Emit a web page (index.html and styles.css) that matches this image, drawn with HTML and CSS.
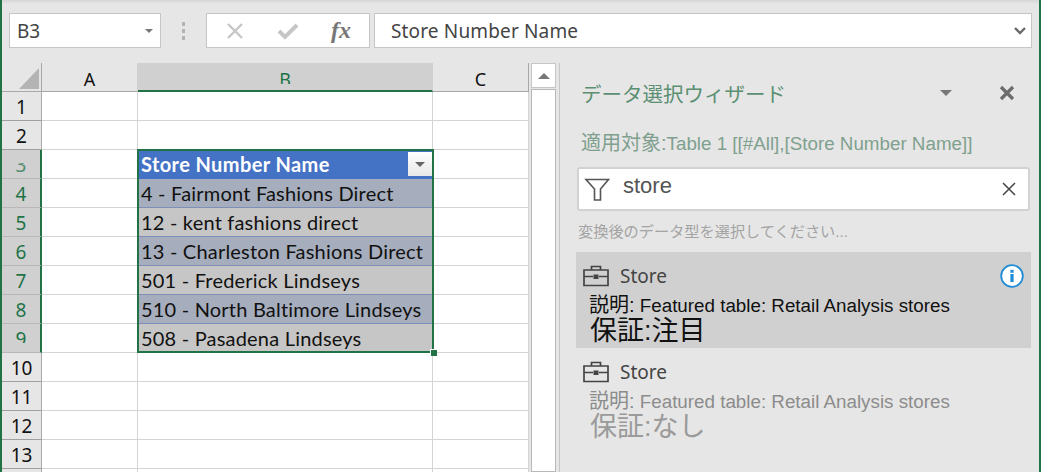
FILE: index.html
```html
<!DOCTYPE html>
<html lang="ja">
<head>
  <meta charset="UTF-8" />
  <meta name="viewport" content="width=device-width, initial-scale=1.0" />
  <title>データ選択ウィザード</title>
  <link rel="stylesheet" href="styles.css">
</head>
<body>
  <div class="formula-bar">
    <div class="name-box">
      <span>B3</span>
      <span class="tri-down small"></span>
    </div>
    <div class="grip"><i></i><i></i><i></i></div>
    <div class="fx-buttons">
      <svg class="fx-icon" width="20" height="20" viewBox="0 0 20 20"><path d="M3 3 L17 17 M17 3 L3 17" stroke="#c6c6c6" stroke-width="2.4" fill="none"/></svg>
      <svg class="fx-icon" width="22" height="20" viewBox="0 0 22 20"><path d="M2 10 L8 16 L20 4" stroke="#c6c6c6" stroke-width="4" fill="none"/></svg>
      <span class="fx-label">fx</span>
    </div>
    <div class="formula-input">
      <span>Store Number Name</span>
      <svg width="12" height="8" viewBox="0 0 12 8"><path d="M1 1 L6 6 L11 1" stroke="#6a6a6a" stroke-width="2.4" fill="none"/></svg>
    </div>
  </div>

  <div class="main">
    <div class="sheet">
      <div class="corner"><div class="corner-tri"></div></div>
      <div class="col-head">A</div>
      <div class="col-head active"><span class="clip-bottom">B</span></div>
      <div class="col-head last">C</div>

      <div class="row-head">1</div><div class="cell"></div><div class="cell"></div><div class="cell"></div>
      <div class="row-head">2</div><div class="cell"></div><div class="cell"></div><div class="cell"></div>
      <div class="row-head active"><span class="clip-top">3</span></div><div class="cell"></div><div class="cell tbl-head">Store Number Name<span class="filter-btn"><span class="tri-down small"></span></span></div><div class="cell"></div>
      <div class="row-head active">4</div><div class="cell"></div><div class="cell tbl band">4 - Fairmont Fashions Direct</div><div class="cell"></div>
      <div class="row-head active">5</div><div class="cell"></div><div class="cell tbl">12 - kent fashions direct</div><div class="cell"></div>
      <div class="row-head active">6</div><div class="cell"></div><div class="cell tbl band">13 - Charleston Fashions Direct</div><div class="cell"></div>
      <div class="row-head active">7</div><div class="cell"></div><div class="cell tbl">501 - Frederick Lindseys</div><div class="cell"></div>
      <div class="row-head active">8</div><div class="cell"></div><div class="cell tbl band">510 - North Baltimore Lindseys</div><div class="cell"></div>
      <div class="row-head active"><span class="clip-bottom">9</span></div><div class="cell"></div><div class="cell tbl">508 - Pasadena Lindseys</div><div class="cell"></div>
      <div class="row-head">10</div><div class="cell"></div><div class="cell"></div><div class="cell"></div>
      <div class="row-head">11</div><div class="cell"></div><div class="cell"></div><div class="cell"></div>
      <div class="row-head">12</div><div class="cell"></div><div class="cell"></div><div class="cell"></div>
      <div class="row-head">13</div><div class="cell"></div><div class="cell"></div><div class="cell"></div>
      <div class="row-head"></div><div class="cell"></div><div class="cell"></div><div class="cell"></div>

      <div class="selection"><span class="handle"></span></div>
    </div>

    <div class="scrollbar">
      <div class="scroll-up"><span class="tri-up"></span></div>
      <div class="scroll-track"></div>
    </div>

    <div class="pane">
      <div class="pane-title">
        <h1>データ選択ウィザード</h1>
        <span class="tri-down pane-menu"></span>
        <svg class="pane-close" width="16" height="16" viewBox="0 0 16 16"><path d="M2 2 L14 14 M14 2 L2 14" stroke="#6b6b6b" stroke-width="3.2" fill="none"/></svg>
      </div>
      <div class="applies"><span class="jp">適用対象:</span>Table 1 [[#All],[Store Number Name]]</div>
      <div class="search">
        <svg width="26" height="26" viewBox="0 0 26 26"><path d="M2 3.5 H24.5 L16.5 13 V24 H10.5 V13 Z" stroke="#555" stroke-width="1.6" fill="#fff"/></svg>
        <span class="search-text">store</span>
        <svg class="search-clear" width="14" height="14" viewBox="0 0 14 14"><path d="M1 1 L13 13 M13 1 L1 13" stroke="#444" stroke-width="1.5" fill="none"/></svg>
      </div>
      <div class="hint">変換後のデータ型を選択してください...</div>

      <div class="item selected">
        <div class="item-head">
          <svg class="case" width="26" height="22" viewBox="0 0 26 22"><path d="M8.5 5 V1.5 H17.5 V5 M1 5 H25 V20.5 H1 Z M1 11.5 H10 M16 11.5 H25" stroke="#444" stroke-width="1.7" fill="none"/><rect x="10.5" y="9.5" width="5" height="4.5" fill="#444"/></svg>
          <span class="item-name">Store</span>
          <svg class="info" width="24" height="24" viewBox="0 0 24 24"><circle cx="12" cy="12" r="10.8" stroke="#1e8cd6" stroke-width="1.8" fill="#fff"/><rect x="10.4" y="10" width="3.2" height="8" fill="#1e8cd6"/><rect x="10.4" y="5.8" width="3.2" height="3" fill="#1e8cd6"/></svg>
        </div>
        <div class="desc"><span class="jp">説明:</span> Featured table: Retail Analysis stores</div>
        <div class="cert">保証:注目</div>
      </div>

      <div class="item">
        <div class="item-head">
          <svg class="case" width="26" height="22" viewBox="0 0 26 22"><path d="M8.5 5 V1.5 H17.5 V5 M1 5 H25 V20.5 H1 Z M1 11.5 H10 M16 11.5 H25" stroke="#444" stroke-width="1.7" fill="none"/><rect x="10.5" y="9.5" width="5" height="4.5" fill="#444"/></svg>
          <span class="item-name">Store</span>
        </div>
        <div class="desc"><span class="jp">説明:</span> Featured table: Retail Analysis stores</div>
        <div class="cert">保証:なし</div>
      </div>
    </div>
  </div>
</body>
</html>
```

FILE: styles.css
```css
* {
  box-sizing: border-box;
}
html, body {
  margin: 0;
  padding: 0;
  height: 472px;
  overflow: hidden;
}
body {
  background: #e6e6e6;
  border-left: 2px solid #217346;
  border-right: 2px solid #217346;
  font-family: "Liberation Sans", "Noto Sans CJK JP", sans-serif;
}

.formula-bar {
  display: flex;
  align-items: stretch;
  height: 63px;
  padding: 13px 7px 15px 7px;
  background: linear-gradient(#d6d6d6, #e6e6e6 4px);
}
.name-box, .fx-buttons, .formula-input {
  background: #fff;
  border: 1px solid #c6c6c6;
  display: flex;
  align-items: center;
  font-family: "Noto Sans", sans-serif;
  font-size: 19px;
  color: #444;
}
.name-box {
  width: 152px;
  padding: 0 7px;
  justify-content: space-between;
}
.grip {
  width: 45px;
  display: flex;
  flex-direction: column;
  align-items: center;
  justify-content: center;
  gap: 3px;
}
.grip i {
  width: 3px;
  height: 4px;
  background: #b4b4b4;
}
.fx-buttons {
  width: 164px;
  padding: 0 18px 0 18px;
  justify-content: space-between;
}
.fx-label {
  font-family: "Liberation Serif", serif;
  font-style: italic;
  font-weight: bold;
  font-size: 24px;
  color: #777;
}
.formula-input {
  width: 658px;
  margin-left: 4px;
  padding: 0 5px 0 16px;
  justify-content: space-between;
  letter-spacing: 0.15px;
}
.tri-down {
  display: inline-block;
  width: 0;
  height: 0;
  border-left: 6px solid transparent;
  border-right: 6px solid transparent;
  border-top: 6px solid #777;
}
.tri-down.small {
  border-left-width: 4px;
  border-right-width: 4px;
  border-top-width: 4px;
}
.tri-up {
  display: block;
  width: 0;
  height: 0;
  border-left: 6px solid transparent;
  border-right: 6px solid transparent;
  border-bottom: 6px solid #777;
}

.main {
  display: flex;
  height: 409px;
}

.sheet {
  position: relative;
  width: 527px;
  height: 409px;
  overflow: hidden;
  flex: none;
  display: grid;
  grid-template-columns: 40px 96px 295px 96px;
  grid-auto-rows: 29px;
  align-content: start;
  background: #fff;
  font-family: "Lato", sans-serif;
  font-size: 20px;
  color: #111;
  letter-spacing: 0.2px;
}
.corner {
  background: #e6e6e6;
  border-right: 1px solid #a8a8a8;
  border-bottom: 1px solid #a8a8a8;
  position: relative;
}
.corner-tri {
  position: absolute;
  right: 2px;
  bottom: 2px;
  width: 0;
  height: 0;
  border-left: 20px solid transparent;
  border-bottom: 21px solid #b4b4b4;
}
.col-head {
  background: #e6e6e6;
  border-right: 1px solid #d0d0d0;
  border-bottom: 1px solid #a8a8a8;
  text-align: center;
  line-height: 32px;
  font-family: "Noto Sans", sans-serif;
  font-size: 18px;
  overflow: hidden;
  letter-spacing: 0;
}
.col-head.active {
  background: #d0d0d0;
  border-bottom: 2px solid #217346;
  color: #217346;
}
.col-head.last {
  border-right: 1px solid #a8a8a8;
}
.row-head {
  background: #e6e6e6;
  border-right: 1px solid #a8a8a8;
  border-bottom: 1px solid #9f9f9f;
  font-family: "Noto Sans", sans-serif;
  font-size: 19px;
  letter-spacing: 0;
  line-height: 30px;
  text-align: center;
}
.row-head.active {
  background: #d0d0d0;
  border-right: 2px solid #217346;
  border-bottom-color: #b8b8b8;
  color: #217346;
}
/* the reference has these labels half repainted */
.clip-top {
  display: inline-block;
  clip-path: inset(13px 0 0 0);
  opacity: 0.7;
}
.clip-bottom {
  display: inline-block;
  clip-path: inset(0 0 11px 0);
}
.cell {
  border-right: 1px solid #d4d4d4;
  border-bottom: 1px solid #d4d4d4;
  line-height: 29px;
  white-space: nowrap;
  overflow: hidden;
  padding: 0 2px 0 4px;
}
.tbl {
  background: #c6c6c6;
  border-right: none;
  border-bottom: 1px solid #7f90b8;
  padding-left: 3px;
}
.tbl.band {
  background: #a6adbc;
}
.tbl-head {
  background: #4472c4;
  color: #fff;
  font-weight: bold;
  border-right: none;
  border-bottom: 1px solid #4472c4;
  position: relative;
  padding-left: 3px;
  letter-spacing: 0.4px;
}
.filter-btn {
  position: absolute;
  right: 1px;
  top: 2px;
  width: 24px;
  height: 24px;
  background: linear-gradient(#fff, #e8e8e8);
  display: flex;
  align-items: center;
  justify-content: center;
}
.filter-btn .tri-down {
  border-left-width: 5px;
  border-right-width: 5px;
  border-top-width: 5px;
  border-top-color: #666;
}
.selection {
  position: absolute;
  left: 135px;
  top: 86px;
  width: 297px;
  height: 204px;
  border: 2px solid #217346;
  pointer-events: none;
}
.handle {
  position: absolute;
  right: -5px;
  bottom: -5px;
  background: #217346;
  border-left: 1px solid #fff;
  border-top: 1px solid #fff;
  box-sizing: content-box;
  width: 6px;
  height: 6px;
}

.scrollbar {
  width: 25px;
  margin-left: 2px;
  flex: none;
  display: flex;
  flex-direction: column;
  background: #e6e6e6;
}
.scroll-up {
  height: 25px;
  background: #fff;
  border: 1px solid #c6c6c6;
  display: flex;
  align-items: center;
  justify-content: center;
}
.scroll-track {
  flex: 1;
  margin-top: 1px;
  background: #fff;
  border: 1px solid #b8b8b8;
}

.pane {
  flex: 1;
  margin-left: 3px;
  border-left: 1px solid #c6c6c6;
  padding: 0 8px 0 16px;
}
.pane-title {
  display: flex;
  align-items: center;
  height: 60px;
  padding-left: 5px;
}
.pane-title h1 {
  margin: 0;
  font-size: 20.5px;
  font-weight: normal;
  color: #5a8f72;
  flex: 1;
}
.pane-menu {
  margin-right: 47px;
}
.pane-close {
  margin-right: 16px;
}
.applies {
  height: 24px;
  padding-left: 5px;
  font-size: 18.8px;
  line-height: 24px;
  margin-top: 8px;
  color: #7fa08e;
  white-space: nowrap;
}
.jp {
  font-size: 20px;
}
.search {
  display: flex;
  align-items: center;
  height: 44px;
  margin: 12px 1px 0 1px;
  padding: 0 12px 0 5px;
  background: #fff;
  border: 2px solid #d2d2d2;
  border-radius: 3px;
}
.search-text {
  flex: 1;
  margin-left: 13px;
  margin-top: -6px;
  font-size: 22px;
  color: #555;
}
.hint {
  height: 41px;
  padding: 8px 0 0 2px;
  font-size: 15.2px;
  color: #a3a3a3;
  white-space: nowrap;
}
.item {
  height: 96px;
  padding: 12px 7px 0 7px;
}
.item.selected {
  background: #d0d0d0;
}
.item-head {
  display: flex;
  align-items: center;
  height: 24px;
}
.item-name {
  flex: 1;
  margin-left: 11px;
  font-family: "Noto Sans", sans-serif;
  font-size: 19px;
  color: #444;
}
.desc {
  height: 22px;
  margin: 6px 0 0 6px;
  font-size: 18.8px;
  line-height: 22px;
  color: #8c8c8c;
  white-space: nowrap;
}
.cert {
  margin: -1px 0 0 7px;
  font-size: 27px;
  line-height: 32px;
  color: #9a9a9a;
  white-space: nowrap;
}
.selected .desc {
  color: #111;
}
.selected .cert {
  color: #111;
}
```
